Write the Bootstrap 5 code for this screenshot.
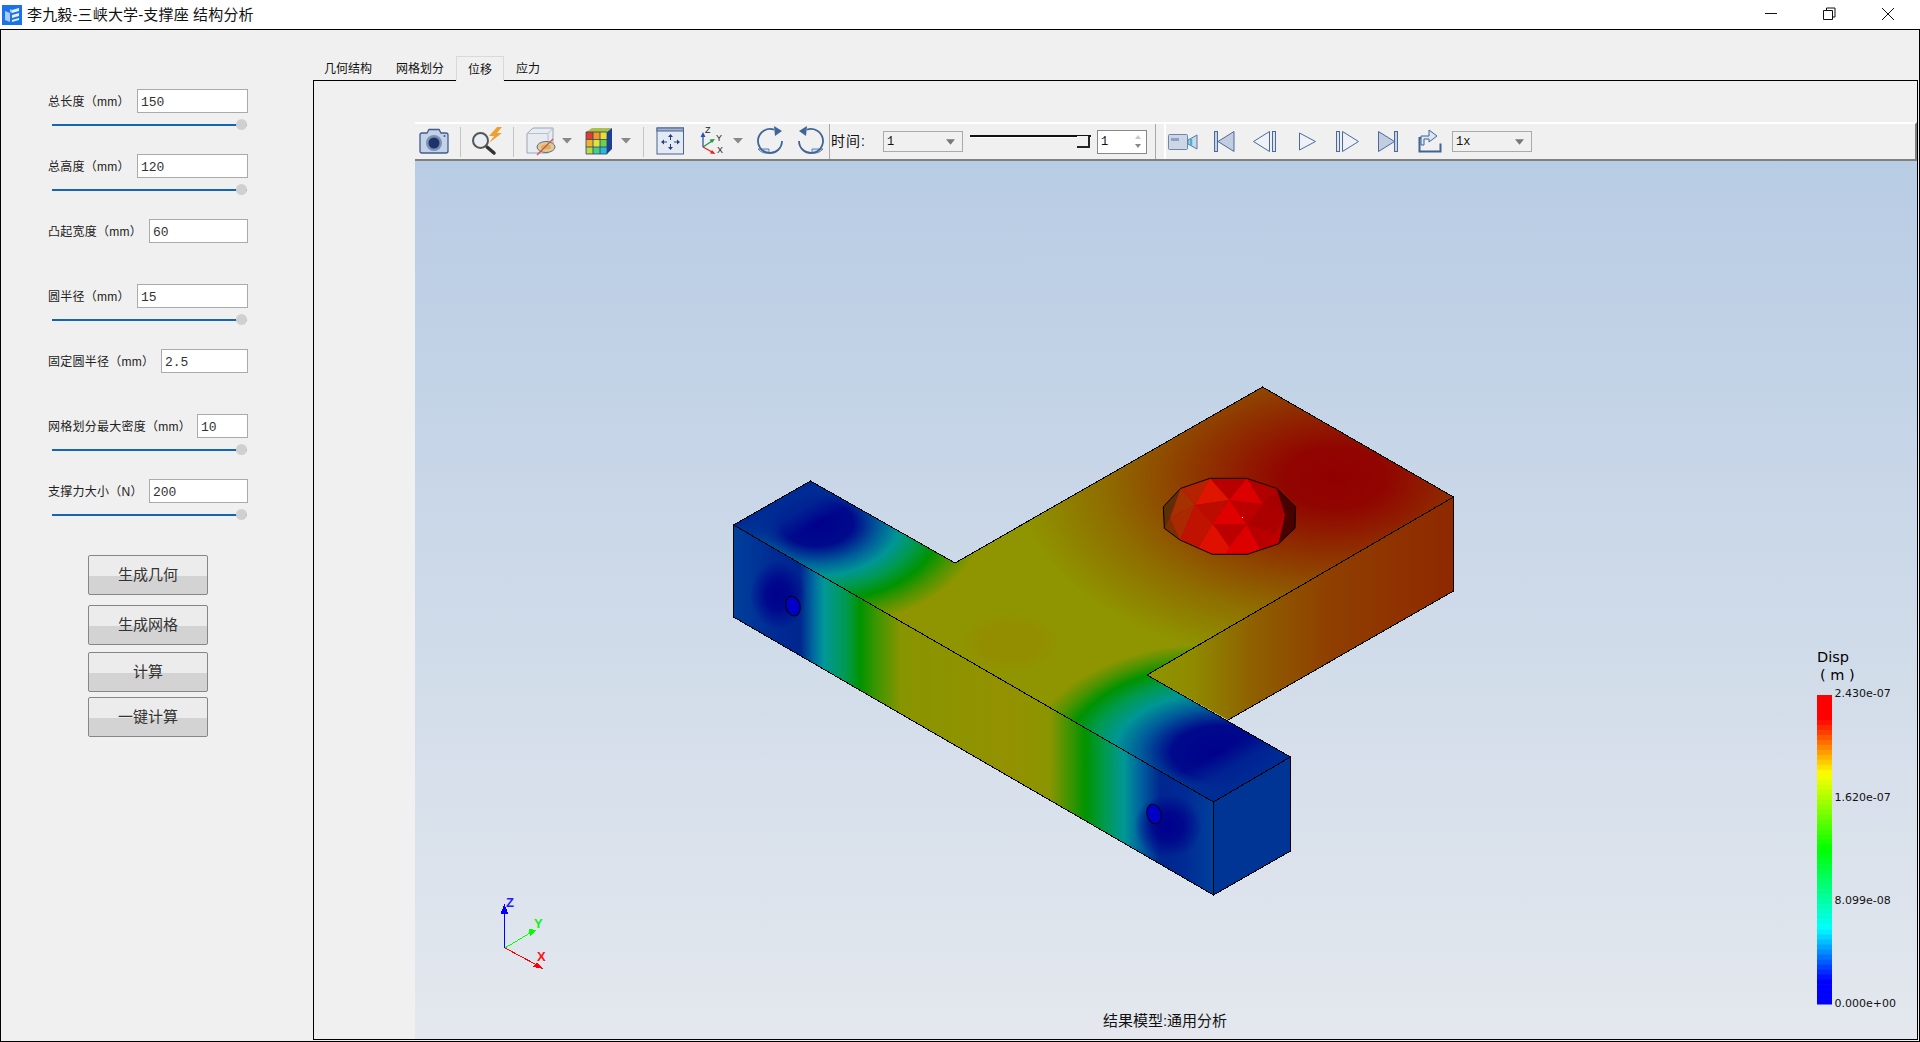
<!DOCTYPE html>
<html lang="zh-CN">
<head>
  <meta charset="UTF-8" />
  <title>李九毅-三峡大学-支撑座 结构分析</title>
  <link href="https://cdn.jsdelivr.net/npm/bootstrap@5.3.3/dist/css/bootstrap.min.css" rel="stylesheet" />
  <style>
    html, body {
      height: 1042px;
      overflow: hidden;
    }
    body {
      background-color: #fff;
      color: #111;
      font-family: "Liberation Sans", "Noto Sans CJK SC", sans-serif;
    }
    .title-bar {
      height: 29px;
      font-size: 15px;
      line-height: 29px;
      letter-spacing: .15px;
    }
    .title-logo { margin: 0 5px 0 2px; }
    .client-area {
      height: 1013px;
      background-color: #f0f0f0;
      border: 1px solid #000;
    }
    .param-side {
      width: 312px;
      flex: none;
      padding: 59px 0 0 47px;
    }
    .param-group {
      width: 200px;
      height: 65px;
    }
    .param-label {
      padding-top: 2px;
      font-size: 12px;
      letter-spacing: .25px;
      color: #222;
      white-space: nowrap;
    }
    .param-input {
      height: 24px;
      padding: 2px 3px 0;
      border: 1px solid #aaa;
      border-radius: 0;
      font-family: "Liberation Mono", monospace;
      font-size: 13px;
      color: #333;
    }
    .w-111 { width: 111px; }
    .w-99 { width: 99px; }
    .w-87 { width: 87px; }
    .w-51 { width: 51px; }
    .param-slider {
      display: block;
      width: 195px;
      height: 11px;
      margin: 6px 0 0 4px;
    }
    .param-slider::-webkit-slider-runnable-track {
      height: 2px;
      background-color: #1565b5;
      border-radius: 0;
    }
    .param-slider::-webkit-slider-thumb {
      width: 11px;
      height: 11px;
      margin-top: -4.5px;
      background-color: #d0d0d0;
      border: 0;
      border-radius: 50%;
    }
    .act-btn {
      display: block;
      width: 120px;
      height: 40px;
      margin-left: 40px;
      padding: 0;
      font-size: 15px;
      color: #333;
      border: 1px solid #868686;
      border-radius: 2px;
      background: linear-gradient(#ececec 52%, #d3d3d3 52%);
    }
    .gap-first { margin-top: 11px; }
    .gap-10 { margin-top: 10px; }
    .gap-7 { margin-top: 7px; }
    .gap-5 { margin-top: 5px; }
    .result-side {
      width: 1605px;
      flex: none;
      padding-top: 26px;
      margin-bottom: 1px;
    }
    .view-tabs {
      height: 24px;
      margin-left: -1px;
      border: 0;
      font-size: 12px;
    }
    .view-tabs .nav-link {
      height: 25px;
      margin: 0;
      padding: 0 12px;
      line-height: 27px;
      color: #111;
      border: 0;
      border-radius: 0;
      position: relative;
      z-index: 1;
    }
    .view-tabs .nav-link.active {
      padding: 0 11px;
      line-height: 26px;
      color: #111;
      background-color: #f0f0f0;
      border: 1px solid #d9d9d9;
      border-bottom-color: #f0f0f0;
    }
    .tab-body {
      height: 960px;
      padding: 41px 0 0 101px;
      border: 1px solid #000;
    }
    .vtk-bar {
      height: 39px;
      background-color: #f0f0f0;
      border-top: 2px solid #fff;
      border-right: 2px solid #808080;
      border-bottom: 2px solid #808080;
    }
    .tool-ic { display: block; flex: none; }
    .tool-sep {
      width: 1px;
      margin: 3px 0 2px;
      background-color: #c4c4c4;
      flex: none;
    }
    .tool-sep-full {
      width: 1px;
      background-color: #a8a8a8;
      flex: none;
    }
    .time-label {
      width: 53px;
      padding-left: 1px;
      font-size: 14px;
      letter-spacing: 1px;
      line-height: 35px;
      flex: none;
    }
    .tool-select {
      width: 80px;
      height: 21px;
      padding: 0 0 0 3px;
      border: 1px solid #aaa;
      border-radius: 0;
      font-family: "Liberation Mono", monospace;
      font-size: 12px;
      color: #111;
      background-color: #f0f0f0;
      background-size: 9px 6px;
      background-position: right 7px center;
      background-image: url("data:image/svg+xml,%3csvg xmlns='http://www.w3.org/2000/svg' viewBox='0 0 10 6'%3e%3cpath fill='%23777' d='M0 0h10L5 6z'/%3e%3c/svg%3e");
      flex: none;
    }
    .time-slider {
      width: 121px;
      margin-left: 7px;
      position: relative;
      flex: none;
    }
    .time-groove {
      height: 2px;
      margin-top: 11px;
      background-color: #111;
      border-bottom: 1px solid #fff;
      box-sizing: content-box;
    }
    .time-thumb {
      position: absolute;
      right: 1px;
      top: 12px;
      width: 13px;
      height: 12px;
      background-color: #f0f0f0;
      border-right: 2px solid #222;
      border-bottom: 2px solid #222;
    }
    .time-spin {
      width: 50px;
      height: 24px;
      margin-left: 6px;
      padding-left: 3px;
      font-family: "Liberation Mono", monospace;
      font-size: 12px;
      line-height: 22px;
      background-color: #fff;
      border: 1px solid #888;
      flex: none;
    }
    .mid-sep { margin: 0 0 0 8px; }
    .play-group {
      margin-left: 8px;
      border-left: 2px solid #fff;
      flex: none;
    }
    .render-view {
      height: 878px;
      background: linear-gradient(#b8cce4, #e4e8ee);
    }
    .render-view svg { display: block; }
    .legend-label {
      font-family: "DejaVu Sans", sans-serif;
      font-size: 11px;
      fill: #111;
    }
    .legend-title {
      font-family: "DejaVu Sans", sans-serif;
      font-size: 14.5px;
      fill: #000;
    }
    .model-name {
      font-size: 15px;
      fill: #111;
    }
    .triad-letter {
      font-family: "Liberation Sans", sans-serif;
      font-size: 13px;
      font-weight: 700;
    }
    .axis-letter {
      font-family: "Liberation Sans", sans-serif;
      font-size: 9px;
      fill: #222;
    }
  </style>
</head>
<body>
  <!-- title bar -->
  <div class="title-bar d-flex align-items-center">
    <svg class="title-logo" width="20" height="20" viewBox="0 0 20 20">
      <rect width="20" height="20" fill="#1a73e8" />
      <path d="M3 6l5 2v9l-5-2zM8 4l2 1v3l-2-1z" fill="#a9cbf7" />
      <path d="M10 5l7-2v3l-7 2zM10 10l7-2v3l-7 2zM10 15l7-2v2l-7 2z" fill="#e4eefc" />
    </svg>
    <span>李九毅-三峡大学-支撑座 结构分析</span>
    <div class="ms-auto d-flex">
      <svg class="tool-ic" width="54" height="29" viewBox="1750 0 54 29">
        <path d="M1765 13.5h12" stroke="#111" fill="none" />
      </svg>
      <svg class="tool-ic" width="56" height="29" viewBox="1804 0 56 29">
        <path d="M1823.5 10.5h9v9h-9zM1826.5 10.5v-2.500h8.500v9h-2.500" stroke="#111" fill="none" />
      </svg>
      <svg class="tool-ic" width="60" height="29" viewBox="1860 0 60 29">
        <path d="M1882 8l12 12M1894 8l-12 12" stroke="#111" fill="none" />
      </svg>
    </div>
  </div>

  <div class="client-area d-flex">
    <!-- parameters -->
    <div class="param-side">
      <div class="param-group">
        <div class="d-flex justify-content-between align-items-center">
          <span class="param-label">总长度（mm）</span>
          <input type="text" class="form-control param-input w-111" value="150" />
        </div>
        <input type="range" class="form-range param-slider" value="100" />
      </div>
      <div class="param-group">
        <div class="d-flex justify-content-between align-items-center">
          <span class="param-label">总高度（mm）</span>
          <input type="text" class="form-control param-input w-111" value="120" />
        </div>
        <input type="range" class="form-range param-slider" value="100" />
      </div>
      <div class="param-group">
        <div class="d-flex justify-content-between align-items-center">
          <span class="param-label">凸起宽度（mm）</span>
          <input type="text" class="form-control param-input w-99" value="60" />
        </div>
      </div>
      <div class="param-group">
        <div class="d-flex justify-content-between align-items-center">
          <span class="param-label">圆半径（mm）</span>
          <input type="text" class="form-control param-input w-111" value="15" />
        </div>
        <input type="range" class="form-range param-slider" value="100" />
      </div>
      <div class="param-group">
        <div class="d-flex justify-content-between align-items-center">
          <span class="param-label">固定圆半径（mm）</span>
          <input type="text" class="form-control param-input w-87" value="2.5" />
        </div>
      </div>
      <div class="param-group">
        <div class="d-flex justify-content-between align-items-center">
          <span class="param-label">网格划分最大密度（mm）</span>
          <input type="text" class="form-control param-input w-51" value="10" />
        </div>
        <input type="range" class="form-range param-slider" value="100" />
      </div>
      <div class="param-group">
        <div class="d-flex justify-content-between align-items-center">
          <span class="param-label">支撑力大小（N）</span>
          <input type="text" class="form-control param-input w-99" value="200" />
        </div>
        <input type="range" class="form-range param-slider" value="100" />
      </div>
      <button type="button" class="btn act-btn gap-first">生成几何</button>
      <button type="button" class="btn act-btn gap-10">生成网格</button>
      <button type="button" class="btn act-btn gap-7">计算</button>
      <button type="button" class="btn act-btn gap-5">一键计算</button>
    </div>

    <!-- result view -->
    <div class="result-side">
      <ul class="nav nav-tabs view-tabs">
        <li class="nav-item"><a class="nav-link" href="#">几何结构</a></li>
        <li class="nav-item"><a class="nav-link" href="#">网格划分</a></li>
        <li class="nav-item"><a class="nav-link active" href="#">位移</a></li>
        <li class="nav-item"><a class="nav-link" href="#">应力</a></li>
      </ul>
      <div class="tab-body">
        <div class="vtk-bar d-flex">
          <!-- screenshot -->
          <svg class="tool-ic" width="45" height="35" viewBox="415 124 45 35">
            <path d="M427 133l2-3.500h10l2 3.500h5a2 2 0 0 1 2 2v16a2 2 0 0 1-2 2h-24a2 2 0 0 1-2-2v-16a2 2 0 0 1 2-2z" fill="#c3d2e6" stroke="#3f5c8c" stroke-width="1.300" />
            <circle cx="434" cy="143" r="8" fill="#7a90b6" />
            <circle cx="434" cy="143" r="5.500" fill="#1e3468" />
            <circle cx="444.500" cy="136" r="1" fill="#3f5c8c" />
          </svg>
          <div class="tool-sep"></div>
          <!-- view with lightning -->
          <svg class="tool-ic" width="52" height="35" viewBox="461 124 52 35">
            <path d="M487 147l7 6" stroke="#333" stroke-width="3.500" stroke-linecap="round" />
            <circle cx="480.500" cy="140.500" r="7.500" fill="#e9eef5" stroke="#555" stroke-width="2" />
            <path d="M497 127l-8 9h5l-5 7 13-10h-5l5-6z" fill="#eea133" />
          </svg>
          <div class="tool-sep"></div>
          <!-- clip box -->
          <svg class="tool-ic" width="60" height="35" viewBox="514 124 60 35">
            <path d="M527 133.500l6-5.500h20v19l-5 6h-21z" fill="#e8ebf0" stroke="#98a6bc" />
            <path d="M527 133.500h21v19.500M548 133.500l5-5.500" fill="none" stroke="#b4bfd0" />
            <ellipse cx="546" cy="147" rx="9" ry="5.500" fill="#e7c88e" stroke="#5a6f95" />
            <ellipse cx="546" cy="147" rx="5" ry="2.500" fill="#d9ae6a" />
            <path d="M553 139l-16 16" stroke="#d2553a" stroke-width="1.300" />
            <path d="M562 138h10l-5 5.500z" fill="#888" />
          </svg>
          <!-- contour cube -->
          <svg class="tool-ic" width="69" height="35" viewBox="574 124 69 35">
            <path d="M592 128h20l-5 4h-21z" fill="#a9c24a" />
            <path d="M607 132l5-4v21l-5 5z" fill="#1d3f92" />
            <rect x="586" y="132" width="7" height="7.500" fill="#e33c2a" />
            <rect x="593" y="132" width="7" height="7.500" fill="#f19a24" />
            <rect x="600" y="132" width="7" height="7.500" fill="#eadf2e" />
            <rect x="586" y="139.500" width="7" height="7.500" fill="#f1b32c" />
            <rect x="593" y="139.500" width="7" height="7.500" fill="#dfe43a" />
            <rect x="600" y="139.500" width="7" height="7.500" fill="#6cd04a" />
            <rect x="586" y="147" width="7" height="7" fill="#b5dc45" />
            <rect x="593" y="147" width="7" height="7" fill="#45cf86" />
            <rect x="600" y="147" width="7" height="7" fill="#2fb6d8" />
            <path d="M586 132h21v22h-21zM593 132v22M600 132v22M586 139.500h21M586 147h21" fill="none" stroke="#2b3f6e" stroke-width=".8" />
            <path d="M621 138h10l-5 5.500z" fill="#888" />
          </svg>
          <div class="tool-sep"></div>
          <!-- fit view -->
          <svg class="tool-ic" width="48" height="35" viewBox="644 124 48 35">
            <rect x="657" y="128" width="26.500" height="26" fill="#e4eaf3" stroke="#4a6390" />
            <rect x="657" y="128" width="26.500" height="3" fill="#9fb2d0" stroke="#4a6390" />
            <path d="M670.500 134l-2.500 3h5zM670.500 150l-2.500-3h5zM661 142l3-2.500v5zM680 142l-3-2.500v5z" fill="#24407a" />
            <path d="M670.500 136v4M670.500 144v4M663 142h4M674 142h4" stroke="#24407a" />
          </svg>
          <!-- axes -->
          <svg class="tool-ic" width="53" height="35" viewBox="692 124 53 35">
            <path d="M703 147v-11" stroke="#2a55b0" stroke-width="1.300" />
            <path d="M703 132l-2.500 5h5z" fill="#2a55b0" />
            <path d="M703 147l9-6" stroke="#1d9a4a" stroke-width="1.300" />
            <path d="M715 139l-5.500 .5 2.500 3.500z" fill="#1d9a4a" />
            <path d="M703 147l9 5" stroke="#e02525" stroke-width="1.300" />
            <path d="M715.500 154l-5.500-.5 2-3.500z" fill="#e02525" />
            <text class="axis-letter" x="705" y="133">Z</text>
            <text class="axis-letter" x="716" y="141">Y</text>
            <text class="axis-letter" x="717" y="153">X</text>
            <path d="M733 138h10l-5 5.500z" fill="#888" />
          </svg>
          <!-- rotate cw -->
          <svg class="tool-ic" width="46" height="35" viewBox="745 124 46 35">
            <path d="M758 149h11v4a12 12 0 0 1-11-4z" fill="#cfe0f2" stroke="#3f6596" stroke-width=".8" />
            <path d="M782 141a12 12 0 1 1-8-11.300" fill="none" stroke="#3f6596" stroke-width="1.800" />
            <path d="M774 126l8 5-7 5z" fill="#3f6596" />
          </svg>
          <!-- rotate ccw -->
          <svg class="tool-ic" width="38" height="35" viewBox="791 124 38 35">
            <path d="M823 149h-11v4a12 12 0 0 0 11-4z" fill="#cfe0f2" stroke="#3f6596" stroke-width=".8" />
            <path d="M799 141a12 12 0 1 0 8-11.300" fill="none" stroke="#3f6596" stroke-width="1.800" />
            <path d="M807 126l-8 5 7 5z" fill="#3f6596" />
          </svg>
          <div class="tool-sep-full"></div>
          <span class="time-label">时间:</span>
          <select class="form-select tool-select align-self-center">
            <option>1</option>
          </select>
          <div class="time-slider">
            <div class="time-groove"></div>
            <div class="time-thumb"></div>
          </div>
          <div class="time-spin align-self-center d-flex justify-content-between">
            <span>1</span>
            <svg width="12" height="22" viewBox="0 0 12 22">
              <path d="M1 8l3-4 3 4z" fill="#c8c8c8" />
              <path d="M1 13h6l-3 4z" fill="#888" />
            </svg>
          </div>
          <div class="tool-sep-full mid-sep"></div>
          <div class="play-group d-flex">
            <!-- record -->
            <svg class="tool-ic" width="40" height="35" viewBox="1166 124 40 35">
              <rect x="1168.500" y="134.500" width="19" height="15" rx="1" fill="#cdd6e4" stroke="#6f86aa" />
              <rect x="1171" y="138" width="8" height="3" fill="#8fa2c0" />
              <path d="M1188 140l9-5v14l-9-5z" fill="#cbd6e6" stroke="#5a78a4" />
              <path d="M1191 138.500v7" stroke="#39b7d8" stroke-width="2.500" />
            </svg>
            <!-- first -->
            <svg class="tool-ic" width="38" height="35" viewBox="1206 124 38 35">
              <rect x="1214.500" y="131.500" width="3" height="20" fill="#c5d0e2" stroke="#4a6a9a" />
              <path d="M1218 141.500l16-10v20z" fill="#c2cde0" stroke="#4a6a9a" />
            </svg>
            <!-- previous -->
            <svg class="tool-ic" width="44" height="35" viewBox="1244 124 44 35">
              <path d="M1253.500 141.500l16-10v20z" fill="#eef2f8" stroke="#4a6a9a" />
              <rect x="1272.500" y="131.500" width="3" height="20" fill="#dfe6f1" stroke="#4a6a9a" />
            </svg>
            <!-- play -->
            <svg class="tool-ic" width="40" height="35" viewBox="1288 124 40 35">
              <path d="M1299.500 133v17l16-8.500z" fill="#eef2f8" stroke="#4a6a9a" />
            </svg>
            <!-- next -->
            <svg class="tool-ic" width="40" height="35" viewBox="1328 124 40 35">
              <rect x="1336.500" y="131.500" width="3" height="20" fill="#dfe6f1" stroke="#4a6a9a" />
              <path d="M1342.500 131.500v20l16-10z" fill="#eef2f8" stroke="#4a6a9a" />
            </svg>
            <!-- last -->
            <svg class="tool-ic" width="40" height="35" viewBox="1368 124 40 35">
              <path d="M1378.500 131.500v20l16-10z" fill="#c2cde0" stroke="#4a6a9a" />
              <rect x="1394.500" y="131.500" width="3" height="20" fill="#c5d0e2" stroke="#4a6a9a" />
            </svg>
            <!-- export -->
            <svg class="tool-ic" width="44" height="35" viewBox="1408 124 44 35">
              <path d="M1425 138h-5.500v13.500h21v-8" fill="none" stroke="#3f6596" stroke-width="2" />
              <path d="M1429 130l8 6-8 6v-3h-5v6h-3v-9h8z" fill="#dce6f3" stroke="#3f6596" />
            </svg>
            <select class="form-select tool-select align-self-center">
              <option>1x</option>
            </select>
          </div>
        </div>

        <div class="render-view">
          <svg width="1501" height="878" viewBox="415 161 1501 878">
            <defs>
              <linearGradient id="frontField" gradientUnits="userSpaceOnUse" x1="733" y1="0" x2="1213" y2="0">
                <stop offset="0" stop-color="#00409b" />
                <stop offset=".09" stop-color="#002a94" />
                <stop offset=".14" stop-color="#00268f" />
                <stop offset=".17" stop-color="#00709f" />
                <stop offset=".19" stop-color="#009898" />
                <stop offset=".235" stop-color="#009a50" />
                <stop offset=".265" stop-color="#009300" />
                <stop offset=".3" stop-color="#3f9500" />
                <stop offset=".35" stop-color="#889500" />
                <stop offset=".58" stop-color="#949100" />
                <stop offset=".66" stop-color="#8a9500" />
                <stop offset=".7" stop-color="#409400" />
                <stop offset=".735" stop-color="#009300" />
                <stop offset=".775" stop-color="#009a50" />
                <stop offset=".815" stop-color="#009797" />
                <stop offset=".85" stop-color="#00609f" />
                <stop offset=".89" stop-color="#00268f" />
                <stop offset=".94" stop-color="#002a94" />
                <stop offset="1" stop-color="#00409b" />
              </linearGradient>
              <linearGradient id="sideField" gradientUnits="userSpaceOnUse" x1="1147" y1="0" x2="1453" y2="0">
                <stop offset="0" stop-color="#8f9500" />
                <stop offset=".15" stop-color="#8f8a00" />
                <stop offset=".35" stop-color="#8f5f00" />
                <stop offset=".6" stop-color="#8f3f00" />
                <stop offset="1" stop-color="#8f2800" />
              </linearGradient>
              <radialGradient id="hotField" gradientUnits="userSpaceOnUse" cx="0" cy="0" r="1" gradientTransform="translate(1335 478) scale(320 190)">
                <stop offset="0" stop-color="#910000" />
                <stop offset=".16" stop-color="#910500" />
                <stop offset=".42" stop-color="#8f3400" />
                <stop offset=".72" stop-color="#8f6c00" />
                <stop offset="1" stop-color="#8f9500" />
              </radialGradient>
              <radialGradient id="leftField" gradientUnits="userSpaceOnUse" cx="0" cy="0" r="1" gradientTransform="translate(817 523) scale(165 105)">
                <stop offset="0" stop-color="#00008c" />
                <stop offset=".22" stop-color="#000a8c" />
                <stop offset=".38" stop-color="#00609a" />
                <stop offset=".5" stop-color="#009696" />
                <stop offset=".62" stop-color="#009a50" />
                <stop offset=".75" stop-color="#009300" />
                <stop offset=".88" stop-color="#509400" />
                <stop offset="1" stop-color="#8f9500" />
              </radialGradient>
              <radialGradient id="rightField" gradientUnits="userSpaceOnUse" cx="0" cy="0" r="1" gradientTransform="translate(1219 753) scale(190 110)">
                <stop offset="0" stop-color="#00008c" />
                <stop offset=".25" stop-color="#000a8c" />
                <stop offset=".42" stop-color="#00609a" />
                <stop offset=".55" stop-color="#009696" />
                <stop offset=".68" stop-color="#009a50" />
                <stop offset=".8" stop-color="#009300" />
                <stop offset=".9" stop-color="#509400" />
                <stop offset="1" stop-color="#8f9500" />
              </radialGradient>
              <linearGradient id="leftEnd" gradientUnits="userSpaceOnUse" x1="733" y1="525" x2="753" y2="560">
                <stop offset="0" stop-color="#002a94" />
                <stop offset=".5" stop-color="#002a94" stop-opacity=".8" />
                <stop offset="1" stop-color="#002a94" stop-opacity="0" />
              </linearGradient>
              <linearGradient id="rightEnd" gradientUnits="userSpaceOnUse" x1="1213" y1="802" x2="1193" y2="767">
                <stop offset="0" stop-color="#002a94" />
                <stop offset=".5" stop-color="#002a94" stop-opacity=".8" />
                <stop offset="1" stop-color="#002a94" stop-opacity="0" />
              </linearGradient>
              <radialGradient id="midField" gradientUnits="userSpaceOnUse" cx="0" cy="0" r="1" gradientTransform="translate(1011 642) scale(50 30)">
                <stop offset="0" stop-color="#938d00" />
                <stop offset=".6" stop-color="#938e00" />
                <stop offset="1" stop-color="#8f9500" />
              </radialGradient>
              <radialGradient id="holeField" cx=".5" cy=".5" r=".5">
                <stop offset="0" stop-color="#00008c" />
                <stop offset=".45" stop-color="#00008c" stop-opacity=".8" />
                <stop offset="1" stop-color="#00008c" stop-opacity="0" />
              </radialGradient>
              <clipPath id="topClip">
                <path d="M733.500 525L810.500 481 955 563 1262.500 387 1453.500 497 1147 675 1290.500 757 1213.500 802z" />
              </clipPath>
              <clipPath id="frontClip">
                <path d="M733.500 525L1213.500 802V895L733.500 617z" />
              </clipPath>
            </defs>

            <!-- model faces -->
            <path d="M1147 675L1453.500 497V591L1228 720z" fill="url(#sideField)" />
            <path d="M733.500 525L1213.500 802V895L733.500 617z" fill="url(#frontField)" />
            <path d="M1213.500 802L1290.500 757V851L1213.500 895z" fill="#003596" />
            <g clip-path="url(#frontClip)">
              <ellipse cx="778" cy="595" rx="28" ry="34" fill="url(#holeField)" />
              <ellipse cx="1168" cy="826" rx="34" ry="32" fill="url(#holeField)" />
            </g>
            <path d="M733.500 525L810.500 481 955 563 1262.500 387 1453.500 497 1147 675 1290.500 757 1213.500 802z" fill="#8f9500" />
            <g clip-path="url(#topClip)">
              <rect x="1000" y="380" width="460" height="360" fill="url(#hotField)" />
              <ellipse cx="1011" cy="642" rx="50" ry="30" fill="url(#midField)" />
              <ellipse cx="817" cy="523" rx="165" ry="105" fill="url(#leftField)" />
              <ellipse cx="1219" cy="753" rx="190" ry="110" fill="url(#rightField)" />
              <rect x="725" y="470" width="140" height="130" fill="url(#leftEnd)" />
              <rect x="1130" y="700" width="170" height="110" fill="url(#rightEnd)" />
            </g>

            <!-- model edges -->
            <path shape-rendering="crispEdges" fill="none" stroke="#000" d="M733.500 525L810.500 481 955 563 1262.500 387 1453.500 497 1147 675 1290.500 757 1213.500 802 733.500 525V617L1213.500 895 1290.500 851V757M1213.500 802V895M1453.500 497V591L1228 720" />

            <!-- side holes -->
            <ellipse cx="793" cy="606" rx="7" ry="10" transform="rotate(-15 793 606)" fill="#0000c8" stroke="#000" />
            <ellipse cx="1154" cy="814" rx="7" ry="10" transform="rotate(-15 1154 814)" fill="#0000c8" stroke="#000" />

            <!-- top hole, faceted -->
            <g transform="translate(1130 450) scale(.3333)">
              <path d="M240 85H350L440 115 497 170 495 235 445 282 352 313H247L150 270 103 235 100 170 152 115z" fill="#c00000" />
              <path d="M100 170L152 115 120 205 103 235z" fill="#5c2f08" />
              <path d="M103 235L120 205 150 270z" fill="#7a3000" />
              <path d="M152 115L240 85 195 165z" fill="#b52200" />
              <path d="M152 115L195 165 120 205z" fill="#a53000" />
              <path d="M120 205L195 165 150 270z" fill="#a92a00" />
              <path d="M150 270L195 165 248 222 205 295z" fill="#c01200" />
              <path d="M240 85L298 150 195 165z" fill="#e01500" />
              <path d="M350 85L298 150 398 162z" fill="#dc0000" />
              <path d="M240 85H350L298 150z" fill="#b80000" />
              <path d="M195 165L298 150 248 222z" fill="#bc0c00" />
              <path d="M298 150L398 162 350 225z" fill="#bc0000" />
              <path d="M298 150L350 225 248 222z" fill="#e00000" />
              <path d="M248 222H350L298 292z" fill="#bc0000" />
              <path d="M248 222L298 292 285 313H247L205 295z" fill="#e01000" />
              <path d="M350 225L390 298 352 313H310L298 292z" fill="#dd0000" />
              <path d="M298 292L285 313H310z" fill="#e60000" />
              <path d="M350 85L440 115 398 162z" fill="#b00000" />
              <path d="M398 162L465 195 440 250 350 225z" fill="#ac0000" />
              <path d="M350 225L440 250 390 298z" fill="#b80000" />
              <path d="M440 115L465 195 398 162z" fill="#a60000" />
              <path d="M440 115L497 170 495 235 445 282 465 195z" fill="#480000" />
              <path d="M240 85H350L440 115 497 170 495 235 445 282 352 313H247L150 270 103 235 100 170 152 115z" fill="none" stroke="#000" stroke-width="3" />
            </g>
            <rect x="1242" y="517" width="1" height="1" fill="#fff" />

            <!-- triad -->
            <g shape-rendering="crispEdges">
              <path d="M504.500 948V910" stroke="#0000ff" fill="none" />
              <path d="M504.500 904l-4 10h8z" fill="#0000ff" />
              <path d="M505 948l25-15" stroke="#00ff00" fill="none" />
              <path d="M537 930l-8-1 1 7z" fill="#00ff00" />
              <path d="M505 948l30 16" stroke="#ff0000" fill="none" />
              <path d="M543 969l-6-7-4 5z" fill="#ff0000" />
            </g>
            <text class="triad-letter" x="506" y="907" fill="#2020ff">Z</text>
            <text class="triad-letter" x="534" y="928" fill="#10f010">Y</text>
            <text class="triad-letter" x="537" y="961" fill="#ff1010">X</text>

            <!-- legend -->
            <text class="legend-title" x="1817" y="662">Disp</text>
            <text class="legend-title" x="1820" y="680">( m )</text>
            <g id="legendBands"></g>
            <text class="legend-label" x="1834.500" y="697">2.430e-07</text>
            <text class="legend-label" x="1834.500" y="801">1.620e-07</text>
            <text class="legend-label" x="1834.500" y="904">8.099e-08</text>
            <text class="legend-label" x="1834.500" y="1007">0.000e+00</text>

            <text class="model-name" x="1165" y="1026" text-anchor="middle">结果模型:通用分析</text>
          </svg>
        </div>
      </div>
    </div>
  </div>

  <script src="https://cdn.jsdelivr.net/npm/bootstrap@5.3.3/dist/js/bootstrap.bundle.min.js"></script>
  <script>
    // stepped colour bar of the legend
    const bands = document.getElementById("legendBands");
    const stops = [[0, 0], [0.07, 0], [0.25, 60], [0.5, 120], [0.76, 180], [0.93, 240], [1, 240]];
    const count = 62;
    const hueAt = (t) => {
      for (let i = 1; i < stops.length; i++) {
        if (t <= stops[i][0]) {
          const [t0, h0] = stops[i - 1];
          const [t1, h1] = stops[i];
          return h0 + (h1 - h0) * (t - t0) / (t1 - t0);
        }
      }
      return 240;
    };
    for (let i = 0; i < count; i++) {
      const r = document.createElementNS("http://www.w3.org/2000/svg", "rect");
      r.setAttribute("x", 1817);
      r.setAttribute("y", 695 + i * 309 / count);
      r.setAttribute("width", 15);
      r.setAttribute("height", 309 / count + 0.5);
      r.setAttribute("fill", `hsl(${hueAt(i / (count - 1))}, 100%, 50%)`);
      bands.appendChild(r);
    }
  </script>
</body>
</html>
